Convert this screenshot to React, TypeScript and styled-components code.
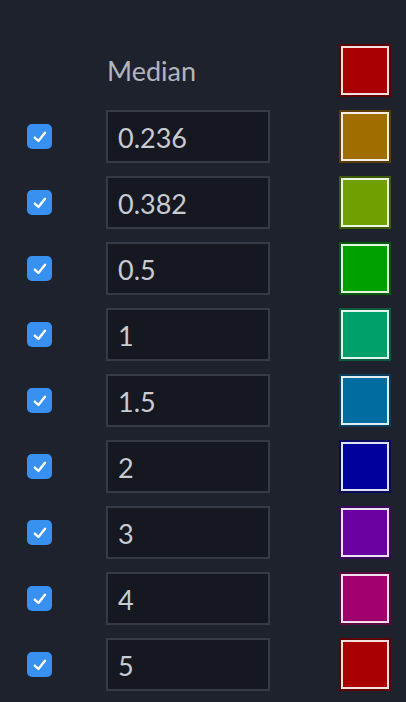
import React from "react";
import styled, { createGlobalStyle } from "styled-components";

const Global = createGlobalStyle`
  html, body { margin: 0; padding: 0; background: #1e222d; }
  body { font-family: Lato, "Noto Sans", sans-serif; }
`;

const Page = styled.div`
  width: 406px;
  height: 702px;
  background: #1e222d;
  box-sizing: border-box;
  padding: 44px 0 0 27px;
`;

const Grid = styled.div`
  display: grid;
  grid-template-columns: 25px 164px 52px;
  column-gap: 54px;
  grid-auto-rows: 53px;
  row-gap: 13px;
  align-items: center;
  & > :nth-child(3n) { margin-left: 15px; }
`;

const Label = styled.div`
  color: #b2b5be;
  font-size: 27px;
  padding-left: 1px;
`;

const Check = styled.div`
  width: 25px;
  height: 25px;
  border-radius: 5px;
  background: #3890f0;
  display: flex;
  align-items: center;
  justify-content: center;
`;

const Input = styled.div`
  box-sizing: border-box;
  height: 53px;
  border: 2px solid #363a45;
  background: #151821;
  color: #c8cbd2;
  font-size: 27px;
  display: flex;
  align-items: center;
  padding-left: 10px;
  padding-top: 1px;
`;

const Swatch = styled.div<{ $d: string }>`
  box-sizing: border-box;
  width: 52px;
  height: 53px;
  padding: 2px;
  background: ${(p) => p.$d};
`;

const SwatchInner = styled.div<{ $c: string }>`
  box-sizing: border-box;
  width: 100%;
  height: 100%;
  border: 2px solid rgba(255, 255, 255, 0.88);
  background: ${(p) => p.$c};
`;

const Empty = styled.div``;

const levels: { v: string; c: string; d: string }[] = [
  { v: "0.236", c: "#a06e00", d: "#5a3e05" },
  { v: "0.382", c: "#6fa000", d: "#3c5a08" },
  { v: "0.5", c: "#00a000", d: "#075a0a" },
  { v: "1", c: "#00a06b", d: "#0a5a3e" },
  { v: "1.5", c: "#006c9f", d: "#0a3c5c" },
  { v: "2", c: "#00009c", d: "#0a0a5c" },
  { v: "3", c: "#6b00a0", d: "#3c0a5c" },
  { v: "4", c: "#a0006b", d: "#5c0a3e" },
  { v: "5", c: "#a80000", d: "#5c0505" },
];

const Tick = () => (
  <svg width="18" height="18" viewBox="0 0 18 18">
    <path d="M3.8 9.6 L7.4 13 L14 4.8" fill="none" stroke="#fff" strokeWidth="2.4" strokeLinecap="round" strokeLinejoin="round" />
  </svg>
);

export default function App() {
  return (
    <>
      <Global />
      <Page>
        <Grid>
          <Empty />
          <Label>Median</Label>
          <Swatch $d="#5c0505"><SwatchInner $c="#a80000" /></Swatch>
          {levels.map((l) => (
            <React.Fragment key={l.v}>
              <Check><Tick /></Check>
              <Input>{l.v}</Input>
              <Swatch $d={l.d}><SwatchInner $c={l.c} /></Swatch>
            </React.Fragment>
          ))}
        </Grid>
      </Page>
    </>
  );
}
